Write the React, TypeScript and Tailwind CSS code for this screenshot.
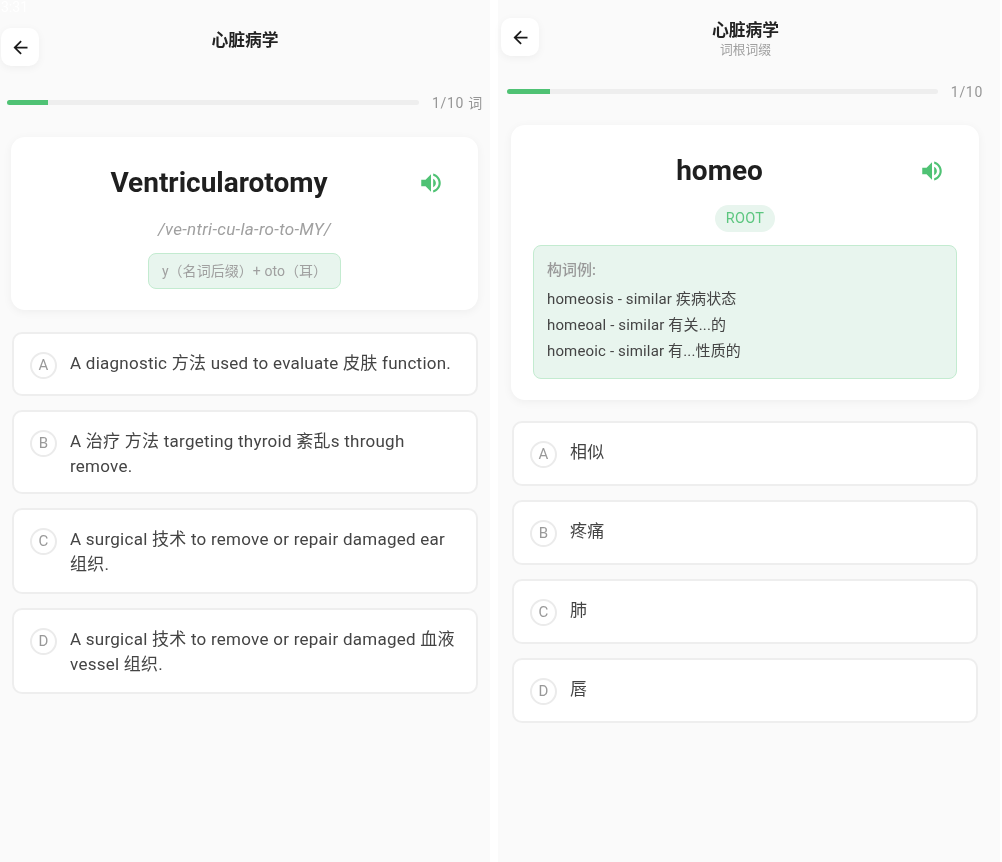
import React from "react";

const FONT = "font-['Roboto','Noto_Sans_CJK_SC',sans-serif]";

function Back() {
  return (
    <button className="w-[38px] h-[38px] rounded-[10px] bg-white shadow-[0_2px_8px_rgba(0,0,0,0.05)] flex items-center justify-center">
      <svg width="21" height="21" viewBox="0 0 24 24" fill="#1a1a1a">
        <path d="M20 11H7.83l5.59-5.59L12 4l-8 8 8 8 1.41-1.41L7.83 13H20v-2z" />
      </svg>
    </button>
  );
}

function Speaker() {
  return (
    <div className="w-[48px] h-[36px] shrink-0 flex items-center justify-center">
      <svg width="26" height="26" viewBox="0 0 24 24" fill="#4fc274">
        <path d="M3 9v6h4l5 5V4L7 9H3zm13.5 3c0-1.77-1.02-3.29-2.5-4.03v8.05c1.48-.73 2.5-2.25 2.5-4.02zM14 3.23v2.06c2.89.86 5 3.54 5 6.71s-2.11 5.85-5 6.71v2.06c4.01-.91 7-4.49 7-8.77s-2.99-7.86-7-8.77z" />
      </svg>
    </div>
  );
}

function Progress({ fill, label }: { fill: string; label: string }) {
  return (
    <div className="flex items-center gap-[13px] h-[20px]">
      <div className="flex-1 h-[5px] bg-[#eeeeee] rounded-full overflow-hidden">
        <div className={`h-full bg-[#4fc274] ${fill}`} />
      </div>
      <span className="pt-[1px] text-[14px] leading-[20px] tracking-[0.7px] text-[#969696]">{label}</span>
    </div>
  );
}

function Option({ letter, text, height }: { letter: string; text: string; height: string }) {
  return (
    <div className={`flex gap-[13px] items-start bg-white border-2 border-[#eeeeee] rounded-[10px] pl-[16px] pr-[14px] pt-[16px] ${height}`}>
      <div className="w-[27px] h-[27px] mt-[2px] shrink-0 rounded-full border-2 border-[#ebebeb] flex items-center justify-center text-[15px] text-[#999999]">
        {letter}
      </div>
      <p className="mt-[1px] text-[17px] leading-[25px] tracking-[0.25px] text-[#444444]">{text}</p>
    </div>
  );
}

export default function App() {
  return (
    <div className={`flex w-[1002px] h-[862px] bg-white overflow-hidden blur-[0.5px] ${FONT}`}>
      {/* Left screen */}
      <div className="w-[490px] h-full bg-[#fafafa] px-[1px] relative shrink-0">
        <span className="absolute left-[1px] top-0 text-[14px] leading-[14px] text-white">3:31</span>
        <div className="grid grid-cols-[38px_1fr_38px] pt-[28px]">
          <Back />
          <div className="text-center text-[16.8px] leading-[24px] font-bold text-[#222222]">心脏病学</div>
          <div />
        </div>
        <div className="pl-[6px] pr-[6px] mt-[26px]">
          <Progress fill="w-[10%]" label="1/10 词" />
        </div>
        <div className="ml-[10px] mr-[11px] mt-[25px] h-[173px] bg-white rounded-[14px] shadow-[0_2px_10px_rgba(0,0,0,0.05)] pt-[28px]">
          <div className="flex pl-[20px] pr-[23px]">
            <h1 className="flex-1 text-center text-[28px] leading-[36px] font-bold text-[#1f1f1f]">Ventricularotomy</h1>
            <Speaker />
          </div>
          <p className="mt-[16px] text-center text-[17px] leading-[24px] tracking-[0.3px] italic text-[#a0a0a0]">/ve-ntri-cu-la-ro-to-MY/</p>
          <div className="flex justify-center mt-[12px]">
            <div className="h-[36px] px-[13px] flex items-center rounded-[8px] bg-[#e8f5ee] border border-[#c3ebd0] text-[14px] tracking-[0.05px] text-[#a0a0a0]">
              y（名词后缀）+ oto（耳）
            </div>
          </div>
        </div>
        <div className="flex flex-col gap-[14px] ml-[11px] mr-[11px] mt-[21.5px]">
          <Option height="h-[64px]" letter="A" text="A diagnostic 方法 used to evaluate 皮肤 function." />
          <Option height="h-[84px]" letter="B" text="A 治疗 方法 targeting thyroid 紊乱s through remove." />
          <Option height="h-[86px]" letter="C" text="A surgical 技术 to remove or repair damaged ear 组织." />
          <Option height="h-[86px]" letter="D" text="A surgical 技术 to remove or repair damaged 血液 vessel 组织." />
        </div>
      </div>

      {/* Divider */}
      <div className="w-[8px] shrink-0" />

      {/* Right screen */}
      <div className="w-[502px] h-full bg-[#fafafa] pl-[3px] pr-[10px] shrink-0">
        <div className="grid grid-cols-[38px_1fr_38px] pt-[18px]">
          <Back />
          <div className="text-center">
            <div className="mt-[1px] text-[16.8px] leading-[23px] font-bold text-[#222222]">心脏病学</div>
            <div className="text-[12.8px] leading-[16px] text-[#a0a0a0]">词根词缀</div>
          </div>
          <div />
        </div>
        <div className="pl-[6px] pr-[7px] mt-[23px]">
          <Progress fill="w-[10%]" label="1/10" />
        </div>
        <div className="ml-[10px] mr-[11px] mt-[24px] h-[275px] bg-white rounded-[14px] shadow-[0_2px_10px_rgba(0,0,0,0.05)] pt-[28px]">
          <div className="flex pl-[20px] pr-[23px]">
            <h1 className="flex-1 text-center text-[28px] leading-[36px] font-bold text-[#1f1f1f]">homeo</h1>
            <Speaker />
          </div>
          <div className="flex justify-center mt-[16px]">
            <div className="h-[27px] w-[60px] flex items-center justify-center rounded-full bg-[#e8f5ee] text-[14.5px] tracking-[0.3px] text-[#5cc67f]">
              ROOT
            </div>
          </div>
          <div className="mx-[22px] mt-[13px] h-[134px] rounded-[8px] bg-[#e8f5ee] border border-[#c3ebd0] px-[13px] pt-[14px]">
            <div className="text-[15px] leading-[20px] font-medium text-[#999999]">构词例:</div>
            <div className="mt-[6px] text-[15px] leading-[26px] tracking-[0.15px] text-[#444444]">
              <div>homeosis - similar 疾病状态</div>
              <div>homeoal - similar 有关...的</div>
              <div>homeoic - similar 有...性质的</div>
            </div>
          </div>
        </div>
        <div className="flex flex-col gap-[14px] ml-[11px] mr-[12px] mt-[21px]">
          <Option height="h-[65px]" letter="A" text="相似" />
          <Option height="h-[65px]" letter="B" text="疼痛" />
          <Option height="h-[65px]" letter="C" text="肺" />
          <Option height="h-[65px]" letter="D" text="唇" />
        </div>
      </div>
    </div>
  );
}
